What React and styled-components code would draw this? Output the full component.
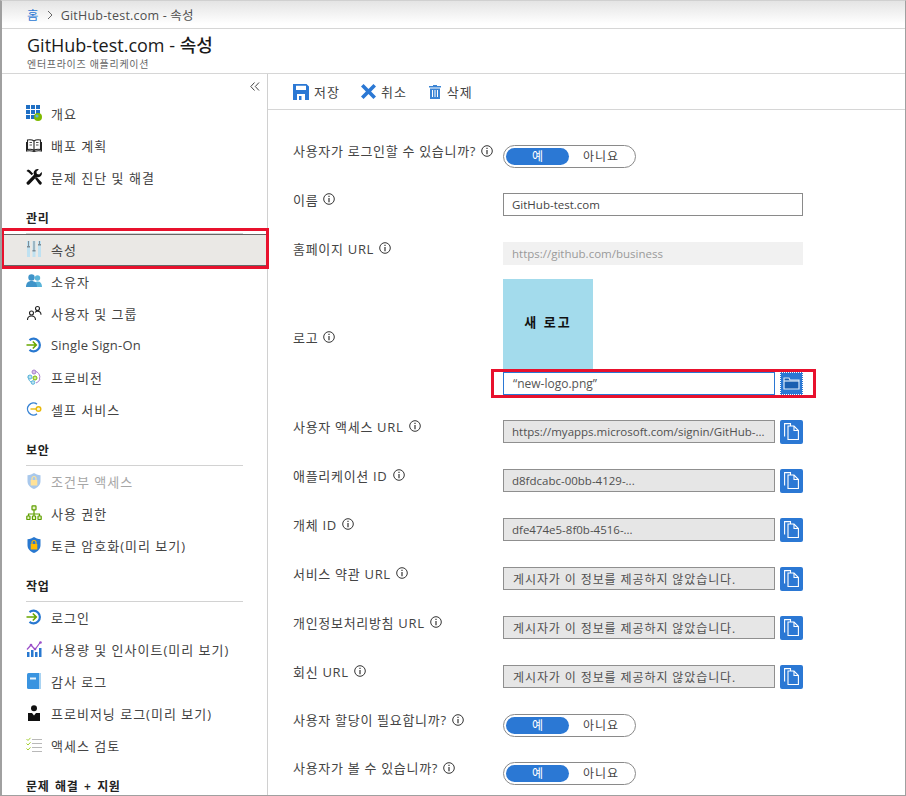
import styled, { createGlobalStyle } from "styled-components";

const FONT = `"Open Sans", "Noto Sans CJK KR", sans-serif`;

const GlobalStyle = createGlobalStyle`
    html, body {
        margin: 0;
        padding: 0;
        background: white;
        overflow: hidden;
    }
    * {
        box-sizing: border-box;
    }
`;

const Icons = {
    overview: (
        <svg viewBox="0 0 16 16">
            <path fill="#1f6fc4" d="M0 0h4v4H0zM5 0h4v4H5zM10 0h4v4h-4zM0 5h4v4H0zM5 5h4v4H5zM10 5h4v4h-4zM0 10h4v4H0zM5 10h4v4H5z" />
            <circle cx="12" cy="12" r="4" fill="#7fba00" />
            <circle cx="11" cy="11" r="1.6" fill="#59b4d9" />
        </svg>
    ),
    book: (
        <svg viewBox="0 0 16 16" fill="none" stroke="#222" strokeWidth="1.1">
            <path d="M8 4C6.5 2.8 3.5 2.6 1.5 3v9.5c2-.4 5-.2 6.5 1 1.5-1.2 4.5-1.4 6.5-1V3C12.5 2.6 9.5 2.8 8 4zM8 4v9.5" />
            <path d="M.5 5v9c2.5-.4 5.500-.2 7.500.6 2-.8 5-1 7.500-.6V5" />
            <path d="M3.500 5.500h2.500M3.500 8h2.500M10 5.500h2.500M10 8h2.500" strokeWidth=".8" />
        </svg>
    ),
    tools: (
        <svg viewBox="0 0 16 16">
            <path fill="#111" d="M11.500 0a4 4 0 0 1 1.400.3L10.400 2.800l.5 2.300 2.300.5L15.700 3.100A4 4 0 0 1 10.400 8L3.400 15.200a1.500 1.500 0 0 1-2.400-2.300L8 5.700A4 4 0 0 1 11.500 0z" />
            <path fill="#111" d="M.5 2 2 .5l1.800.8 3.400 3.500-1.500 1.500-3.500-3.400zM9 9.500l1.600-1.500 4.700 4.900a1.500 1.500 0 0 1-2.300 2.200z" />
        </svg>
    ),
    sliders: (
        <svg viewBox="0 0 16 16">
            <path fill="#bfe1f1" d="M1 0h3v16H1zM6.500 0h3v16h-3zM12 0h3v16h-3z" />
            <path fill="#7d8c96" d="M2 0h1v5H2zM1 5h3v1.500H1zM7.500 0h1v9h-1zM6.500 9h3v1.500h-3zM13 0h1v3h-1zM12 3h3v1.500h-3z" />
        </svg>
    ),
    owners: (
        <svg viewBox="0 0 16 16">
            <circle cx="11.500" cy="5" r="2.700" fill="#59b4d9" />
            <path fill="#59b4d9" d="M9 14h7c0-3.500-1.500-5.500-4.500-5.500-2 0-3 1-3.500 2z" />
            <circle cx="5.500" cy="4.500" r="3.200" fill="#3f94c9" />
            <path fill="#3f94c9" d="M0 14c0-4 2-6 5.500-6s5.500 2 5.500 6z" />
        </svg>
    ),
    users: (
        <svg viewBox="0 0 16 16" fill="none" stroke="#222" strokeWidth="1.100">
            <circle cx="5.500" cy="8" r="2" />
            <path d="M1.500 15c0-2.500 1.500-4 4-4s4 1.500 4 4" />
            <circle cx="11.500" cy="3.500" r="2" />
            <path d="M9 7.500c.6-.8 1.500-1.200 2.500-1.200 2 0 3.500 1.500 3.500 3.500" />
        </svg>
    ),
    sso: (
        <svg viewBox="0 0 16 16" fill="none">
            <path stroke="#2878d0" strokeWidth="2.200" d="M3.500 3.200a6.300 6.300 0 1 1 0 9.600" />
            <path stroke="#68a800" strokeWidth="1.600" d="M.5 8h9.500M6.800 4.500 10.300 8l-3.500 3.500" />
        </svg>
    ),
    provision: (
        <svg viewBox="0 0 16 16" fill="none" strokeWidth="1">
            <path stroke="#a97fd0" d="M8 2a6 6 0 0 1 5.500 8" />
            <path stroke="#59b4d9" d="M8 14a6 6 0 0 1-5.500-8" />
            <path stroke="#a97fd0" d="M10 14a6 6 0 0 0 4-4" />
            <circle cx="8" cy="3" r="2" fill="#d5c2e8" stroke="#a97fd0" />
            <circle cx="4" cy="8" r="2" fill="#bde3f1" stroke="#59b4d9" />
            <circle cx="9" cy="9" r="2" fill="#cfe69a" stroke="#7fba00" />
            <circle cx="7" cy="13.500" r="1.800" fill="#bde3f1" stroke="#59b4d9" />
        </svg>
    ),
    selfservice: (
        <svg viewBox="0 0 16 16" fill="none">
            <path stroke="#3a84d4" strokeWidth="1.400" d="M11 3.100a6 6 0 1 0 0 9.800" />
            <path stroke="#e8b90c" strokeWidth="1.400" d="M4.500 8h6" />
            <circle cx="12.500" cy="8" r="2.300" stroke="#e8b90c" strokeWidth="1.400" fill="#fff8d0" />
        </svg>
    ),
    shield: (
        <svg viewBox="0 0 16 16">
            <path fill="#2878d0" d="M8 0c1.800 1.300 3.800 2 6.500 2.200v6C14.500 12 11.500 14.700 8 16c-3.500-1.300-6.500-4-6.500-7.800v-6C4.200 2 6.200 1.300 8 0z" />
            <path fill="#ffb900" d="M4.700 7h6.600v5.500H4.700z" />
            <path fill="none" stroke="#ffb900" strokeWidth="1.200" d="M6 7V5.500a2 2 0 0 1 4 0V7" />
        </svg>
    ),
    org: (
        <svg viewBox="0 0 16 16" fill="none" stroke="#5f9f00" strokeWidth="1.200">
            <rect x="6" y=".8" width="4" height="4" rx=".6" fill="#e7f2cb" />
            <path d="M8 5v4M2.500 11V9h11v2M8 9v2" />
            <rect x=".8" y="11" width="3.200" height="3.500" rx=".6" fill="#e7f2cb" />
            <rect x="6.400" y="11" width="3.200" height="3.500" rx=".6" fill="#e7f2cb" />
            <rect x="12" y="11" width="3.200" height="3.500" rx=".6" fill="#e7f2cb" />
        </svg>
    ),
    chart: (
        <svg viewBox="0 0 16 16">
            <path fill="#2878d0" d="M1 11h2.500v5H1zM5 9h2.500v7H5zM9 11h2.500v5H9zM13 7h2.500v9H13z" />
            <path fill="none" stroke="#9b4fc9" strokeWidth="1.200" d="M1 8.500 5 4l4 4.500L14.500 1" />
            <circle cx="5" cy="4" r="1.300" fill="#9b4fc9" />
            <circle cx="9" cy="8" r="1.300" fill="#9b4fc9" />
            <circle cx="14.500" cy="1.500" r="1.300" fill="#9b4fc9" />
        </svg>
    ),
    logbook: (
        <svg viewBox="0 0 16 16">
            <rect x="1" y="0" width="14" height="16" rx="1.500" fill="#3a94e0" />
            <rect x="13" y="0" width="2" height="16" fill="#a9d3f2" />
            <rect x="4" y="4.500" width="6" height="2" fill="#e8f4fc" />
        </svg>
    ),
    person: (
        <svg viewBox="0 0 16 16">
            <circle cx="8" cy="3.200" r="3" fill="#111" />
            <path fill="#111" d="M2 8h4l2 2.500L10 8h4v8H2z" />
        </svg>
    ),
    review: (
        <svg viewBox="0 0 16 16" fill="none">
            <path stroke="#b9b9b9" strokeWidth="1" d="M6 2.500h10M6 6.500h10M6 10.500h10M6 14.500h10" />
            <path stroke="#a4cf30" strokeWidth="1" d="m.5 2 1.500 1.500L4.500.8M.5 6.500 2 8l2.500-2.700M.5 11.500 2 13l2.500-2.700" />
        </svg>
    ),
};

const MENU = [
    { items: [["overview", "개요"], ["book", "배포 계획"], ["tools", "문제 진단 및 해결"]] },
    {
        title: "관리",
        items: [
            ["sliders", "속성"],
            ["owners", "소유자"],
            ["users", "사용자 및 그룹"],
            ["sso", "Single Sign-On"],
            ["provision", "프로비전"],
            ["selfservice", "셀프 서비스"],
        ],
    },
    {
        title: "보안",
        items: [["shield", "조건부 액세스"], ["org", "사용 권한"], ["shield", "토큰 암호화(미리 보기)"]],
    },
    {
        title: "작업",
        items: [
            ["sso", "로그인"],
            ["chart", "사용량 및 인사이트(미리 보기)"],
            ["logbook", "감사 로그"],
            ["person", "프로비저닝 로그(미리 보기)"],
            ["review", "액세스 검토"],
        ],
    },
    { title: "문제 해결 + 지원", items: [] },
];

const COPY_ROWS = [
    ["사용자 액세스 URL", "https://myapps.microsoft.com/signin/GitHub-..."],
    ["애플리케이션 ID", "d8fdcabc-00bb-4129-..."],
    ["개체 ID", "dfe474e5-8f0b-4516-..."],
    ["서비스 약관 URL", "게시자가 이 정보를 제공하지 않았습니다."],
    ["개인정보처리방침 URL", "게시자가 이 정보를 제공하지 않았습니다."],
    ["회신 URL", "게시자가 이 정보를 제공하지 않았습니다."],
];

function Info() {
    return (
        <InfoIcon viewBox="0 0 12 12">
            <circle cx="6" cy="6" r="5.300" fill="none" stroke="#333" strokeWidth="1" />
            <path fill="#333" d="M5.400 2.700h1.200v1.200H5.400zM5.400 5h1.200v4.300H5.400z" />
        </InfoIcon>
    );
}

function Label({ children }) {
    return (
        <LabelText>
            {children}
            <Info />
        </LabelText>
    );
}

function Toggle() {
    return (
        <ToggleBox>
            <ToggleOn>예</ToggleOn>
            <ToggleOff>아니요</ToggleOff>
        </ToggleBox>
    );
}

function CopyButton() {
    return (
        <SquareButton>
            <svg width="15" height="17" viewBox="0 0 15 17" fill="none" stroke="white" strokeWidth="1.100">
                <path d="M.6 13.500V.6H6.500V3" />
                <path d="M4 3h6l4.400 4.500v9H4z" />
                <path d="M10 3v4.500h4.400" />
            </svg>
        </SquareButton>
    );
}

export default function App() {
    return (
        <Frame>
            <GlobalStyle />
            <Breadcrumb>
                <HomeLink>홈</HomeLink>
                <Chevron viewBox="0 0 6 10">
                    <path d="m1 1 4 4-4 4" fill="none" stroke="#666" strokeWidth="1" />
                </Chevron>
                <span>GitHub-test.com - 속성</span>
            </Breadcrumb>
            <Header>
                <h1>GitHub-test.com - 속성</h1>
                <p>엔터프라이즈 애플리케이션</p>
            </Header>
            <Body>
                <Sidebar>
                    <CollapseRow>
                        <svg width="10" height="9" viewBox="0 0 10 9" fill="none" stroke="#444" strokeWidth="1">
                            <path d="M4.500.5.800 4.500l3.700 4M9 .5 5.300 4.500l3.700 4" />
                        </svg>
                    </CollapseRow>
                    {MENU.map((section, i) => (
                        <div key={i}>
                            {section.title && <SectionTitle>{section.title}</SectionTitle>}
                            {section.items.map(([icon, text]) => (
                                <MenuItem
                                    key={text}
                                    $selected={text === "속성"}
                                    $faded={text === "조건부 액세스"}
                                    $latin={text === "Single Sign-On"}
                                >
                                    <IconBox $faded={text === "조건부 액세스"}>{Icons[icon]}</IconBox>
                                    {text}
                                </MenuItem>
                            ))}
                        </div>
                    ))}
                </Sidebar>
                <Main>
                    <Toolbar>
                        <ToolButton>
                            <svg width="16" height="16" viewBox="0 0 16 16">
                                <path fill="#2b78d4" fillRule="evenodd" d="M0 0h13.500L16 2.500V16H0zM3 1.800V6h10V1.800zM4 10v6h8v-6z" />
                                <path fill="#2b78d4" d="M6 12h2.500v4H6z" />
                            </svg>
                            저장
                        </ToolButton>
                        <ToolButton>
                            <svg width="15" height="15" viewBox="0 0 14 14">
                                <path fill="#2b78d4" d="M2.400 0 7 4.600 11.600 0 14 2.400 9.400 7 14 11.600 11.600 14 7 9.400 2.400 14 0 11.600 4.600 7 0 2.400z" />
                            </svg>
                            취소
                        </ToolButton>
                        <ToolButton>
                            <svg width="14" height="14" viewBox="-1 0 14 14">
                                <path fill="#3a84d4" d="M4 0h4v1h4v1.500H0V1h4zM1 3.500h10V14H1zM3 5v7h1V5zm2.500 0v7h1V5zM8 5v7h1V5z" fillRule="evenodd" />
                            </svg>
                            삭제
                        </ToolButton>
                    </Toolbar>
                    <Form>
                        <Row $height={48} $top={22}>
                            <Label>사용자가 로그인할 수 있습니까?</Label>
                            <Toggle />
                        </Row>
                        <Row $height={49}>
                            <Label>이름</Label>
                            <TextField>GitHub-test.com</TextField>
                        </Row>
                        <Row $height={49}>
                            <Label>홈페이지 URL</Label>
                            <TextField $disabled>https://github.com/business</TextField>
                        </Row>
                        <LogoRow>
                            <Label>로고</Label>
                            <LogoColumn>
                                <LogoPreview>새 로고</LogoPreview>
                                <FileRow>
                                    <FileInput>“new-logo.png”</FileInput>
                                    <BrowseButton>
                                        <svg width="17" height="13" viewBox="0 0 17 13" fill="none" stroke="#dbe9f8" strokeWidth="1.200">
                                            <path d="M1 12V1h5l1 2h9v9z" fill="#1c5fb0" />
                                            <path d="M1 4h15" />
                                        </svg>
                                    </BrowseButton>
                                    <RedBox />
                                </FileRow>
                            </LogoColumn>
                        </LogoRow>
                        {COPY_ROWS.map(([label, value]) => (
                            <Row key={label} $height={49}>
                                <Label>{label}</Label>
                                <ReadOnlyField $korean={value.startsWith("게시자")}>{value}</ReadOnlyField>
                                <CopyButton />
                            </Row>
                        ))}
                        <Row $height={48}>
                            <Label>사용자 할당이 필요합니까?</Label>
                            <Toggle />
                        </Row>
                        <Row $height={48}>
                            <Label>사용자가 볼 수 있습니까?</Label>
                            <Toggle />
                        </Row>
                    </Form>
                </Main>
            </Body>
        </Frame>
    );
}

const Frame = styled.div`
    width: 906px;
    height: 796px;
    display: flex;
    flex-direction: column;
    overflow: hidden;
    font-family: ${FONT};
    font-size: 13px;
    color: #3e3e3e;
    border: 1px solid #a0a0a0;
    border-left-width: 2px;
    border-top-color: #d0d0d0;
`;

const Breadcrumb = styled.div`
    height: 28px;
    flex-shrink: 0;
    padding-left: 25px;
    display: flex;
    align-items: center;
    gap: 8px;
    font-size: 12.500px;
    letter-spacing: 0.2px;
    color: #505050;
    background: linear-gradient(#e4e4e4, #ffffff 85%);
    border-bottom: 1px solid #d6d6d6;
`;

const HomeLink = styled.span`
    color: #2b78d4;
`;

const Chevron = styled.svg`
    width: 6px;
    height: 10px;
`;

const Header = styled.div`
    height: 45px;
    flex-shrink: 0;
    padding: 4px 0 0 25px;
    border-bottom: 1px solid #d6d6d6;
    h1 {
        margin: 0;
        font-size: 18px;
        line-height: 25px;
        font-weight: 500;
        color: #1a1a1a;
    }
    p {
        margin: 0;
        font-size: 10px;
        line-height: 12px;
        letter-spacing: 0.7px;
        color: #666;
    }
`;

const Body = styled.div`
    flex: 1;
    min-height: 0;
    display: flex;
`;

const Sidebar = styled.div`
    width: 266px;
    flex-shrink: 0;
    border-right: 1px solid #d0d0d0;
`;

const CollapseRow = styled.div`
    height: 24px;
    padding: 4px 7px 0 0;
    display: flex;
    justify-content: flex-end;
    align-items: flex-start;
    svg {
        margin-top: 4px;
    }
`;

const SectionTitle = styled.div`
    height: 40px;
    margin: 0 24px;
    padding-bottom: 6px;
    display: flex;
    align-items: flex-end;
    font-size: 12px;
    font-weight: 600;
    letter-spacing: 0.6px;
    word-spacing: 2px;
    color: #222;
    border-bottom: 1px solid #d2d2d2;
`;

const MenuItem = styled.div`
    position: relative;
    height: 32px;
    padding-left: 24px;
    padding-bottom: 2px;
    display: flex;
    align-items: center;
    gap: 9px;
    letter-spacing: ${(props) => (props.$latin ? "0.2px" : "1px")};
    color: ${(props) => (props.$faded ? "#a6a6a6" : "#444")};
    ${(props) => props.$selected && `
        background: #eae8e5;
        border-top: 1px solid #666;
        border-bottom: 1px solid #666;
        &::after {
            content: "";
            position: absolute;
            inset: -7px -2px -4px -1px;
            border: 3px solid #e8112d;
        }
    `}
`;

const IconBox = styled.span`
    width: 16px;
    height: 16px;
    flex-shrink: 0;
    display: flex;
    opacity: ${(props) => (props.$faded ? 0.4 : 1)};
    svg {
        width: 16px;
        height: 16px;
    }
`;

const Main = styled.div`
    flex: 1;
    min-width: 0;
    overflow: hidden;
`;

const Toolbar = styled.div`
    height: 36px;
    padding-left: 25px;
    display: flex;
    align-items: center;
    gap: 21px;
    border-bottom: 1px solid #d6d6d6;
`;

const ToolButton = styled.div`
    display: flex;
    align-items: center;
    gap: 5px;
    letter-spacing: 1px;
    color: #444;
`;

const Form = styled.div`
    padding-left: 25px;
`;

const Row = styled.div`
    height: ${(props) => props.$height}px;
    margin-top: ${(props) => props.$top || 0}px;
    display: flex;
    align-items: center;
`;

const LogoRow = styled.div`
    display: flex;
    align-items: center;
    height: 129px;
`;

const LogoColumn = styled.div`
    align-self: flex-start;
    margin-top: 1px;
    display: flex;
    flex-direction: column;
    gap: 3px;
`;

const LabelText = styled.div`
    width: 210px;
    flex-shrink: 0;
    margin-top: -11px;
    display: flex;
    align-items: center;
    gap: 5px;
    letter-spacing: 0.7px;
    white-space: nowrap;
    color: #444;
`;

const InfoIcon = styled.svg`
    width: 12px;
    height: 12px;
`;

const ToggleBox = styled.div`
    width: 133px;
    height: 23px;
    padding: 2px;
    display: flex;
    border: 1px solid #8a8a8a;
    border-radius: 12px;
    background: white;
`;

const ToggleOn = styled.div`
    width: 63px;
    display: flex;
    align-items: center;
    justify-content: center;
    font-size: 12px;
    color: white;
    background: #2b78d4;
    border-radius: 9px;
`;

const ToggleOff = styled.div`
    flex: 1;
    display: flex;
    align-items: center;
    justify-content: center;
    font-size: 12px;
    letter-spacing: 1px;
    color: #444;
`;

const TextField = styled.div`
    width: 300px;
    height: 23px;
    padding-left: 8px;
    display: flex;
    align-items: center;
    font-size: 11.500px;
    color: ${(props) => (props.$disabled ? "#9a9a9a" : "#444")};
    background: ${(props) => (props.$disabled ? "#f1f1f1" : "white")};
    border: 1px solid ${(props) => (props.$disabled ? "#f1f1f1" : "#8a8a8a")};
`;

const LogoPreview = styled.div`
    width: 90px;
    height: 90px;
    padding-bottom: 6px;
    display: flex;
    align-items: center;
    justify-content: center;
    font-size: 13px;
    font-weight: 700;
    letter-spacing: 2px;
    color: #111;
    background: #a3dbec;
`;

const FileRow = styled.div`
    position: relative;
    display: flex;
    gap: 5px;
`;

const FileInput = styled.div`
    width: 272px;
    height: 23px;
    padding-left: 9px;
    display: flex;
    align-items: center;
    font-size: 12px;
    color: #555;
    background: white;
    border: 1px solid #2b78d4;
`;

const BrowseButton = styled.div`
    width: 23px;
    height: 23px;
    display: flex;
    align-items: center;
    justify-content: center;
    background: #2b78d4;
    outline: 1px dotted white;
    outline-offset: -1px;
`;

const RedBox = styled.div`
    position: absolute;
    inset: -3px -13px -3px -12px;
    border: 3px solid #e8112d;
`;

const ReadOnlyField = styled.div`
    width: 272px;
    height: 23px;
    padding-left: ${(props) => (props.$korean ? "9px" : "8px")};
    display: flex;
    align-items: center;
    font-size: ${(props) => (props.$korean ? "12px" : "11.500px")};
    letter-spacing: ${(props) => (props.$korean ? "0.9px" : "0")};
    white-space: nowrap;
    color: #505050;
    background: #e6e6e6;
    border: 1px solid #8f8f8f;
`;

const SquareButton = styled.div`
    width: 23px;
    height: 24px;
    margin-left: 5px;
    display: flex;
    align-items: center;
    justify-content: center;
    border-radius: 2px;
    background: #2b78d4;
`;
